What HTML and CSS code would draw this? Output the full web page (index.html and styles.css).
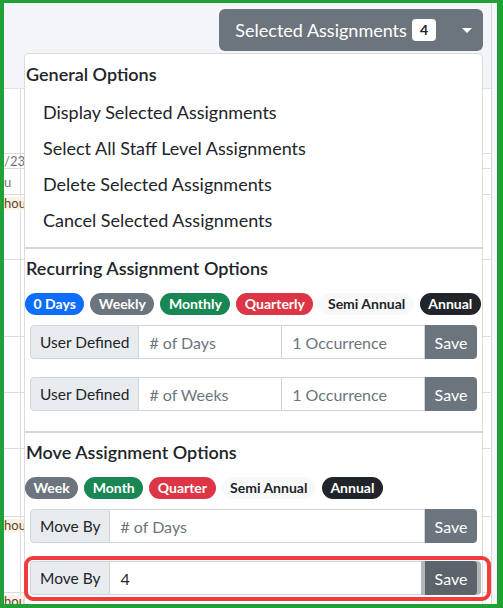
FILE: index.html
```html
<!DOCTYPE html>
<html lang="en">
<head>
    <meta charset="UTF-8">
    <meta name="viewport" content="width=device-width, initial-scale=1.0">
    <title>Selected Assignments</title>
    <link rel="stylesheet" href="styles.css">
</head>
<body>
    <div class="frame">
        <div class="page">
            <div class="toolbar">
                <div class="dropdown">
                    <button class="btn-selected">Selected Assignments <span class="count">4</span><span class="caret"></span></button>

                    <div class="dropdown-menu">
                        <div class="menu-header">General Options</div>
                        <div class="menu-list">
                            <a class="menu-item" href="#">Display Selected Assignments</a>
                            <a class="menu-item" href="#">Select All Staff Level Assignments</a>
                            <a class="menu-item" href="#">Delete Selected Assignments</a>
                            <a class="menu-item" href="#">Cancel Selected Assignments</a>
                        </div>

                        <div class="menu-divider"></div>

                        <div class="menu-section">
                            <div class="menu-header">Recurring Assignment Options</div>
                            <div class="badges">
                                <span class="badge bg-primary">0 Days</span>
                                <span class="badge bg-secondary">Weekly</span>
                                <span class="badge bg-success">Monthly</span>
                                <span class="badge bg-danger">Quarterly</span>
                                <span class="badge bg-light">Semi Annual</span>
                                <span class="badge bg-dark">Annual</span>
                            </div>
                            <div class="input-group">
                                <span class="input-group-text">User Defined</span>
                                <input class="form-control" type="text" placeholder="# of Days">
                                <input class="form-control" type="text" placeholder="1 Occurrence">
                                <button class="btn-save">Save</button>
                            </div>
                            <div class="input-group">
                                <span class="input-group-text">User Defined</span>
                                <input class="form-control" type="text" placeholder="# of Weeks">
                                <input class="form-control" type="text" placeholder="1 Occurrence">
                                <button class="btn-save">Save</button>
                            </div>
                        </div>

                        <div class="menu-divider"></div>

                        <div class="menu-section">
                            <div class="menu-header">Move Assignment Options</div>
                            <div class="badges">
                                <span class="badge bg-secondary">Week</span>
                                <span class="badge bg-success">Month</span>
                                <span class="badge bg-danger">Quarter</span>
                                <span class="badge bg-light">Semi Annual</span>
                                <span class="badge bg-dark">Annual</span>
                            </div>
                            <div class="input-group">
                                <span class="input-group-text">Move By</span>
                                <input class="form-control" type="text" placeholder="# of Days">
                                <button class="btn-save">Save</button>
                            </div>
                            <div class="highlight">
                                <div class="input-group">
                                    <span class="input-group-text">Move By</span>
                                    <input class="form-control" type="text" value="4">
                                    <button class="btn-save focused">Save</button>
                                </div>
                                <div class="callout"></div>
                            </div>
                        </div>
                    </div>
                </div>
            </div>

            <!-- calendar behind the menu, only the edges show -->
            <div class="calendar">
                <div class="cal-row" style="height: 65px"><div class="cal-cell"></div></div>
                <div class="cal-row" style="height: 15px"><div class="cal-cell date">/23</div></div>
                <div class="cal-row" style="height: 26px"><div class="cal-cell day">u</div></div>
                <div class="cal-row" style="height: 65px"><div class="cal-cell"><span class="hour">hour</span></div></div>
                <div class="cal-row" style="height: 77px"><div class="cal-cell"></div></div>
                <div class="cal-row" style="height: 56px"><div class="cal-cell"></div></div>
                <div class="cal-row" style="height: 56px"><div class="cal-cell"></div></div>
                <div class="cal-row" style="height: 68px"><div class="cal-cell"></div></div>
                <div class="cal-row" style="height: 76px"><div class="cal-cell"><span class="hour">hour</span></div></div>
                <div class="cal-row" style="height: 40px"><div class="cal-cell"><span class="hour">hour</span></div></div>
            </div>
        </div>
        <div class="scroll-edge"></div>
    </div>
</body>
</html>
```

FILE: styles.css
```css
body {
    margin: 0;
    font-family: "Segoe UI", Lato, "Liberation Sans", sans-serif;
    color: #212529;
}
.frame {
    display: flex;
    height: 608px;
    box-sizing: border-box;
    border: solid #21a038;
    border-width: 3px 6px 4px 4px;
    overflow: hidden;
    background: #fff;
}
.page {
    flex: 1;
    min-width: 0;
}
.scroll-edge {
    width: 5px;
    border-left: 1px solid #d4d6da;
    background: #f7f8fb;
}
.toolbar {
    height: 86px;
    background: #f3f5f9;
    border-bottom: 1px solid #dee2e6;
    display: flex;
    justify-content: flex-end;
    padding: 6px 8px 0 0;
    box-sizing: border-box;
}
.dropdown {
    position: relative;
}
.btn-selected {
    display: flex;
    align-items: center;
    height: 42px;
    padding: 0 11px 0 16px;
    background: #6c757d;
    color: #fff;
    border: none;
    border-radius: 6px;
    font-family: inherit;
    font-size: 18px;
}
.count {
    background: #fff;
    color: #212529;
    font-size: 14px;
    font-weight: 700;
    line-height: 1;
    padding: 4px 8px;
    border-radius: 4px;
    margin-left: 5px;
}
.caret {
    margin-left: 26px;
    border-top: 5px solid #fff;
    border-left: 5px solid transparent;
    border-right: 5px solid transparent;
}
.dropdown-menu {
    position: absolute;
    top: 44px;
    right: 0;
    width: 459px;
    height: 600px;
    box-sizing: border-box;
    background: #fff;
    border: 1px solid #d9dce1;
    border-radius: 5px;
    padding-top: 7px;
}
.menu-header {
    font-size: 18px;
    font-weight: 600;
    line-height: 27px;
    padding: 0 1px;
}
.menu-list {
    margin: 6px 0 9px;
}
.menu-item {
    display: block;
    padding: 0 18px;
    line-height: 36px;
    font-size: 18px;
    color: #212529;
    text-decoration: none;
}
.menu-divider {
    border-top: 2px solid #d6d6d6;
}
.menu-section {
    padding: 6px 0 20px;
}
.badges {
    display: flex;
    gap: 6px;
    margin-top: 11px;
}
.badge {
    flex-shrink: 0;
    white-space: nowrap;
    font-size: 14px;
    font-weight: 700;
    line-height: 14px;
    padding: 4px 8.5px;
    border-radius: 11px;
    color: #fff;
}
.bg-primary { background: #0d6efd; }
.bg-secondary { background: #6c757d; }
.bg-success { background: #198754; }
.bg-danger { background: #dc3545; }
.bg-light { background: #f8f9fa; color: #212529; }
.bg-dark { background: #212529; }
.input-group {
    display: flex;
    height: 34px;
    margin: 10px 5px 0;
}
.input-group + .input-group,
.highlight {
    margin-top: 18px;
}
.highlight {
    position: relative;
}
.highlight .input-group {
    margin-top: 0;
}
.input-group-text {
    display: flex;
    align-items: center;
    padding: 0 9px;
    background: #e9ecef;
    border: 1px solid #ced4da;
    border-radius: 4px 0 0 4px;
    font-size: 15.5px;
    white-space: nowrap;
}
.form-control {
    flex: 1;
    min-width: 0;
    border: 1px solid #ced4da;
    border-left: none;
    padding: 0 10px;
    font-family: inherit;
    font-size: 16px;
    color: #212529;
    outline: none;
}
.form-control::placeholder {
    color: #6c757d;
}
.btn-save {
    width: 52px;
    border: none;
    background: #6c757d;
    color: #fff;
    font-family: inherit;
    font-size: 16px;
    border-radius: 0 4px 4px 0;
}
.btn-save.focused {
    background: #5c636a;
    box-shadow: -4px 0 0 #b3b7bb, 4px 0 0 #b3b7bb;
}
.callout {
    position: absolute;
    left: -1px;
    right: -9px;
    top: -5px;
    bottom: -6px;
    border: 4px solid #f03c3c;
    border-radius: 9px;
}
.calendar {
    font-size: 13px;
}
.cal-row {
    border-bottom: 1px solid #dcdcdc;
    box-sizing: border-box;
}
.cal-cell {
    width: 16px;
    height: 100%;
    border-right: 1px solid #dcdcdc;
    white-space: nowrap;
}
.date, .day {
    color: #6c757d;
    line-height: 15px;
}
.day {
    line-height: 26px;
}
.hour {
    display: inline-block;
    margin-top: 2px;
    padding-right: 4px;
    background: #fdf1e2;
    border-right: 1px solid #f0c99a;
    color: #5a4630;
    font-size: 13px;
    line-height: 13px;
}
```
